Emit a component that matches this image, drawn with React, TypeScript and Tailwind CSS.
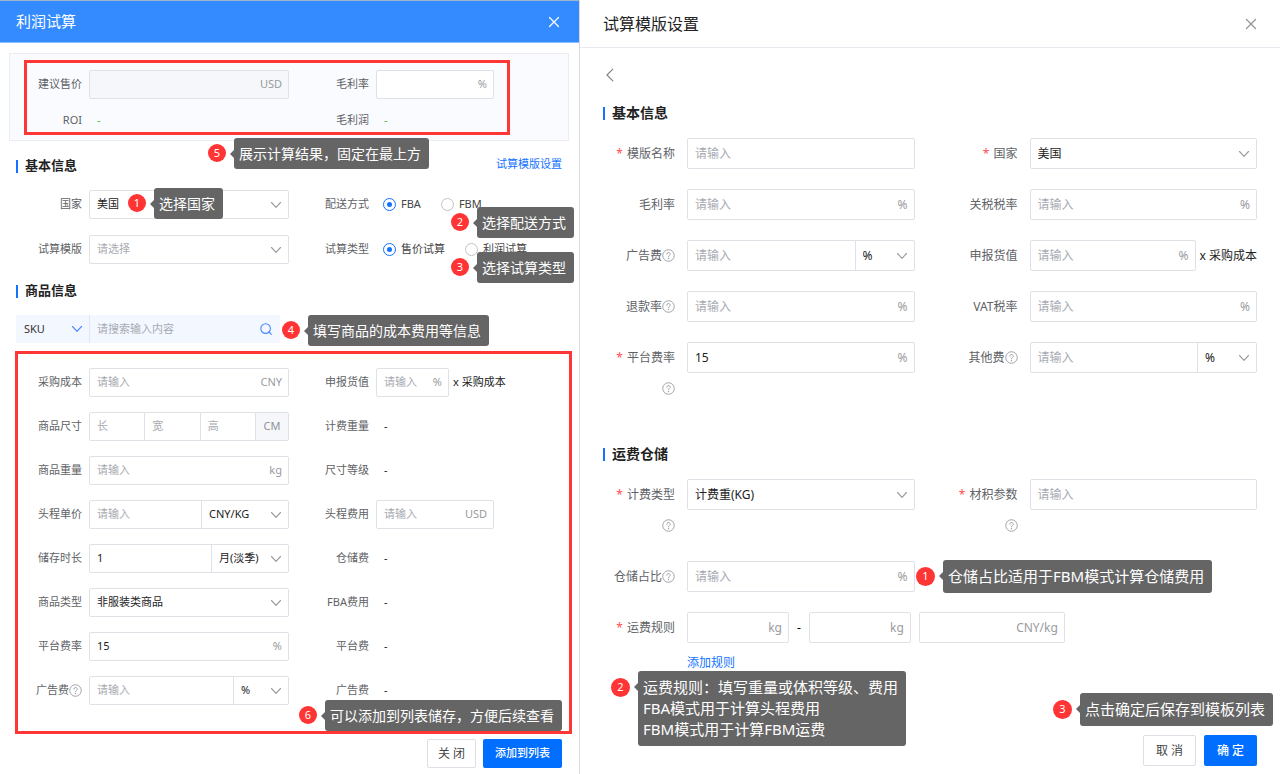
import type { ReactNode } from "react";

type Size = "sm" | "md";

const boxSize = { sm: "h-[29px] text-[11px]", md: "h-[31px] text-xs" };
const leftGrid = "grid grid-cols-[82px_200fr_73px_203fr] gap-x-[7px]";
const rightGrid = "grid grid-cols-[95px_1fr_91px_1fr] gap-x-3 pr-[23px]";

function ChevronDown({ className }: { className: string }) {
  return (
    <svg className={className} viewBox="0 0 12 12" fill="none" stroke="currentColor" strokeWidth={1.1}>
      <path strokeLinecap="round" strokeLinejoin="round" d="M1.5 3.5L6 8.3l4.500-4.800" />
    </svg>
  );
}

function CloseIcon() {
  return (
    <svg className="w-3 h-3" viewBox="0 0 12 12" fill="none" stroke="currentColor" strokeWidth={1.2}>
      <path strokeLinecap="round" d="M1.500 1.500l9 9m0-9l-9 9" />
    </svg>
  );
}

function HelpIcon() {
  return (
    <svg className="w-[13px] h-[13px] shrink-0 text-[#909399]" viewBox="0 0 14 14" fill="none" stroke="currentColor" strokeWidth={0.9}>
      <circle cx="7" cy="7" r="6.200" />
      <path strokeLinecap="round" d="M5.200 5.600a1.800 1.800 0 1 1 2.700 1.500c-.6.35-.9.700-.9 1.300" />
      <circle cx="7" cy="10.300" r="0.350" fill="currentColor" />
    </svg>
  );
}

type LabelProps = { id: string; text: string; size?: Size; required?: boolean; help?: boolean; helpBelow?: boolean };

function FieldLabel({ id, text, size = "sm", required, help, helpBelow }: LabelProps) {
  return (
    <div className="text-[#606266] whitespace-nowrap">
      <label htmlFor={id} className={`flex items-center justify-end ${boxSize[size]}`}>
        {required && <span className="text-[#ff5050] mr-1">*</span>}
        {text}
        {help && <HelpIcon />}
      </label>
      {helpBelow && (
        <div className="h-[31px] flex items-center justify-end">
          <HelpIcon />
        </div>
      )}
    </div>
  );
}

type BoxProps = { size?: Size; className?: string; children: ReactNode };

function Box({ size = "sm", className = "bg-white", children }: BoxProps) {
  return (
    <div className={`flex min-w-0 border border-[#dfe1e6] rounded-xs ${boxSize[size]} ${className}`}>{children}</div>
  );
}

type TextProps = { id?: string; label?: string; value?: string; placeholder?: string; unit?: string; disabled?: boolean };

function Text({ id, label, value, placeholder, unit, disabled }: TextProps) {
  return (
    <>
      <input
        id={id}
        aria-label={label}
        defaultValue={value}
        placeholder={placeholder}
        disabled={disabled}
        className="flex-1 w-0 min-w-0 pl-[7px] text-[#222] placeholder:text-[#a8abb2] outline-none"
      />
      {unit && <span className="self-center pr-[6px] text-[#999ba0]">{unit}</span>}
    </>
  );
}

type PickProps = { id?: string; label?: string; value: string; className?: string; muted?: boolean };

function Pick({ id, label, value, className = "flex-1", muted }: PickProps) {
  return (
    <div className={`relative flex ${className}`}>
      <select
        id={id}
        aria-label={label}
        className={`w-full appearance-none pl-[7px] pr-5 outline-none ${muted ? "text-[#a8abb2]" : "text-[#222]"}`}
      >
        <option>{value}</option>
      </select>
      <ChevronDown className="absolute right-[6px] top-1/2 -translate-y-1/2 w-3 h-3 text-[#999ba0] pointer-events-none" />
    </div>
  );
}

function Radio({ name, text, checked }: { name: string; text: string; checked?: boolean }) {
  return (
    <label className="flex items-center gap-[5px] whitespace-nowrap text-[#444]">
      <input
        type="radio"
        name={name}
        defaultChecked={checked}
        className="appearance-none flex items-center justify-center w-[13px] h-[13px] rounded-full border border-[#bfc2c8] checked:border-[#1373ff] checked:before:content-[''] checked:before:block checked:before:w-[5px] checked:before:h-[5px] checked:before:rounded-full checked:before:bg-[#1373ff]"
      />
      {text}
    </label>
  );
}

function Output({ id, green }: { id: string; green?: boolean }) {
  return (
    <output id={id} className={`pl-2 h-[29px] flex items-center text-[11px] ${green ? "text-[#52b81f]" : "text-[#222]"}`}>
      -
    </output>
  );
}

function SectionTitle({ text, className }: { text: string; className: string }) {
  return (
    <h2 className={`flex items-center h-5 font-bold text-[#222] ${className}`}>
      <span className="w-[2px] h-[13px] bg-[#1373ff] mr-[7px]" />
      {text}
    </h2>
  );
}

type CalloutProps = { n: number; size?: Size; position: string; children: ReactNode };

function Callout({ n, size = "sm", position, children }: CalloutProps) {
  const badge = size === "sm" ? "w-[18px] h-[18px] mt-[6px]" : "w-[19px] h-[19px] mt-[7px]";
  const body = size === "sm" ? "text-sm leading-[19px]" : "text-[15px] leading-[21px]";
  return (
    <div className={`absolute z-10 flex items-start text-white whitespace-nowrap ${position}`}>
      <span className={`rounded-full bg-[#ff3434] text-[11px] flex items-center justify-center ${badge}`}>{n}</span>
      <svg className="w-1 h-2 ml-1 mt-3" viewBox="0 0 4 8" fill="#656565">
        <path d="M4 0v8L0 4z" />
      </svg>
      <div className={`bg-[#656565] rounded-[3px] pl-[5px] pr-2 py-[6px] ${body}`}>{children}</div>
    </div>
  );
}

function ProfitPanel() {
  return (
    <section className="relative flex flex-col border-r border-[#d8d9dc] text-[11px]">
      <header className="h-[43px] shrink-0 bg-[#338bff] border-t border-t-[#9fb3cf] border-b border-b-[#8fbfff] flex items-center justify-between pl-4 pr-[19px] text-white">
        <h1 className="text-[15px]">利润试算</h1>
        <button aria-label="关闭窗口"><CloseIcon /></button>
      </header>

      <div className="relative mt-[10px] ml-[9px] mr-[10px] pt-4 pb-[5px] border border-[#ebedf3] bg-[#fafbff]">
        <div className="grid grid-cols-[72px_200fr_73px_192fr] gap-x-[7px] gap-y-[7px]">
          <FieldLabel id="price" text="建议售价" />
          <Box className="bg-[#f5f7fa]"><Text id="price" unit="USD" disabled /></Box>
          <FieldLabel id="margin" text="毛利率" />
          <Box className="bg-white w-[118px]"><Text id="margin" unit="%" /></Box>
          <FieldLabel id="roi" text="ROI" />
          <Output id="roi" green />
          <FieldLabel id="profit" text="毛利润" />
          <Output id="profit" green />
        </div>
        <div className="absolute left-[14px] right-[58px] top-[6px] bottom-[5px] border-3 border-[#ff3636] pointer-events-none" />
      </div>

      <div className="mt-[15px] pl-4 pr-[17px] flex items-start justify-between">
        <SectionTitle text="基本信息" className="text-[13px]" />
        <a href="#template" className="text-[#1373ff] leading-4">试算模版设置</a>
      </div>

      <div className={`mt-[14px] gap-y-4 ${leftGrid}`}>
        <FieldLabel id="country" text="国家" />
        <Box><Pick id="country" value="美国" /></Box>
        <span className="h-[29px] flex items-center justify-end text-[#606266]">配送方式</span>
        <div role="radiogroup" aria-label="配送方式" className="flex items-center gap-5 pl-[7px]">
          <Radio name="delivery" text="FBA" checked />
          <Radio name="delivery" text="FBM" />
        </div>
        <FieldLabel id="template" text="试算模版" />
        <Box><Pick id="template" value="请选择" muted /></Box>
        <span className="h-[29px] flex items-center justify-end text-[#606266]">试算类型</span>
        <div role="radiogroup" aria-label="试算类型" className="flex items-center gap-5 pl-[7px]">
          <Radio name="mode" text="售价试算" checked />
          <Radio name="mode" text="利润试算" />
        </div>
      </div>

      <SectionTitle text="商品信息" className="mt-[17px] ml-4 text-[13px]" />
      <div className="mt-[14px] ml-4 w-[264px] h-7 flex bg-[#f3f7ff]">
        <div className="relative w-[74px] flex border-r border-[#dfe7f7]">
          <select aria-label="搜索类型" className="w-full appearance-none pl-2 outline-none text-[#333]">
            <option>SKU</option>
          </select>
          <ChevronDown className="absolute right-[6px] top-2 w-3 h-3 text-[#4a86ff] pointer-events-none" />
        </div>
        <Text label="搜索商品" placeholder="请搜索输入内容" />
        <button aria-label="搜索" className="px-2 text-[#4a86ff]">
          <svg className="w-3 h-3" viewBox="0 0 12 12" fill="none" stroke="currentColor" strokeWidth={1.1}>
            <circle cx="5.600" cy="5.600" r="4.800" />
            <path strokeLinecap="round" d="M9 9l2.300 2.300" />
          </svg>
        </button>
      </div>

      <div className="relative mt-2 pt-[17px] pb-[29px]">
        <div className={`gap-y-[15px] ${leftGrid}`}>
          <FieldLabel id="cost" text="采购成本" />
          <Box><Text id="cost" placeholder="请输入" unit="CNY" /></Box>
          <FieldLabel id="declared" text="申报货值" />
          <div className="flex items-center gap-1 whitespace-nowrap text-[#222]">
            <Box className="bg-white w-[73px]"><Text id="declared" placeholder="请输入" unit="%" /></Box>
            x 采购成本
          </div>

          <FieldLabel id="length" text="商品尺寸" />
          <Box>
            <div className="flex-1 flex divide-x divide-[#dfe1e6]">
              <Text id="length" placeholder="长" />
              <Text label="宽" placeholder="宽" />
              <Text label="高" placeholder="高" />
              <span className="w-8 flex items-center justify-center bg-[#f5f7fa] text-[#909399]">CM</span>
            </div>
          </Box>
          <FieldLabel id="charge-weight" text="计费重量" />
          <Output id="charge-weight" />

          <FieldLabel id="weight" text="商品重量" />
          <Box><Text id="weight" placeholder="请输入" unit="kg" /></Box>
          <FieldLabel id="tier" text="尺寸等级" />
          <Output id="tier" />

          <FieldLabel id="first-price" text="头程单价" />
          <Box>
            <Text id="first-price" placeholder="请输入" />
            <Pick label="头程单价单位" value="CNY/KG" className="w-[87px] border-l border-[#dfe1e6]" />
          </Box>
          <FieldLabel id="first-fee" text="头程费用" />
          <Box className="bg-white w-[118px]"><Text id="first-fee" placeholder="请输入" unit="USD" /></Box>

          <FieldLabel id="months" text="储存时长" />
          <Box>
            <Text id="months" value="1" />
            <Pick label="储存季节" value="月(淡季)" className="w-[77px] border-l border-[#dfe1e6]" />
          </Box>
          <FieldLabel id="storage-fee" text="仓储费" />
          <Output id="storage-fee" />

          <FieldLabel id="kind" text="商品类型" />
          <Box><Pick id="kind" value="非服装类商品" /></Box>
          <FieldLabel id="fba-fee" text="FBA费用" />
          <Output id="fba-fee" />

          <FieldLabel id="rate" text="平台费率" />
          <Box><Text id="rate" value="15" unit="%" /></Box>
          <FieldLabel id="platform-fee" text="平台费" />
          <Output id="platform-fee" />

          <FieldLabel id="ads" text="广告费" help />
          <Box>
            <Text id="ads" placeholder="请输入" />
            <Pick label="广告费单位" value="%" className="w-[55px] border-l border-[#dfe1e6]" />
          </Box>
          <FieldLabel id="ads-fee" text="广告费" />
          <Output id="ads-fee" />
        </div>
        <div className="absolute left-[15px] right-[7px] inset-y-0 border-3 border-[#ff3636] pointer-events-none" />
      </div>

      <footer className="mt-[5px] pr-[17px] pb-[5px] flex justify-end gap-[7px]">
        <button className="h-[29px] w-[49px] border border-[#dcdfe6] rounded-xs text-xs text-[#444]">关 闭</button>
        <button className="h-[29px] px-3 rounded-xs bg-[#006eff] text-white font-medium">添加到列表</button>
      </footer>

      <Callout n={5} position="left-[208px] top-[138px]">展示计算结果，固定在最上方</Callout>
      <Callout n={1} position="left-[128px] top-[188px]">选择国家</Callout>
      <Callout n={2} position="left-[451px] top-[207px]">选择配送方式</Callout>
      <Callout n={3} position="left-[451px] top-[252px]">选择试算类型</Callout>
      <Callout n={4} position="left-[282px] top-[315px]">填写商品的成本费用等信息</Callout>
      <Callout n={6} position="left-[299px] top-[700px]">可以添加到列表储存，方便后续查看</Callout>
    </section>
  );
}

function TemplatePanel() {
  return (
    <section className="relative flex flex-col text-xs">
      <header className="h-12 shrink-0 border-b border-[#e8eaef] flex items-center justify-between px-[23px]">
        <h1 className="text-base text-[#222]">试算模版设置</h1>
        <button aria-label="关闭窗口" className="text-[#909399]"><CloseIcon /></button>
      </header>

      <button aria-label="返回" className="mt-5 ml-[23px] w-[14px] text-[#808388]">
        <svg className="w-[14px] h-[14px]" viewBox="0 0 14 14" fill="none" stroke="currentColor" strokeWidth={1.2}>
          <path strokeLinecap="round" strokeLinejoin="round" d="M9.800 1.200L4 7l5.800 5.800" />
        </svg>
      </button>

      <SectionTitle text="基本信息" className="mt-[21px] ml-[23px] text-sm" />
      <div className={`mt-[15px] gap-y-5 ${rightGrid}`}>
        <FieldLabel id="t-name" text="模版名称" size="md" required />
        <Box size="md"><Text id="t-name" placeholder="请输入" /></Box>
        <FieldLabel id="t-country" text="国家" size="md" required />
        <Box size="md"><Pick id="t-country" value="美国" /></Box>

        <FieldLabel id="t-margin" text="毛利率" size="md" />
        <Box size="md"><Text id="t-margin" placeholder="请输入" unit="%" /></Box>
        <FieldLabel id="t-duty" text="关税税率" size="md" />
        <Box size="md"><Text id="t-duty" placeholder="请输入" unit="%" /></Box>

        <FieldLabel id="t-ads" text="广告费" size="md" help />
        <Box size="md">
          <Text id="t-ads" placeholder="请输入" />
          <Pick label="广告费单位" value="%" className="w-[59px] border-l border-[#dfe1e6]" />
        </Box>
        <FieldLabel id="t-declared" text="申报货值" size="md" />
        <div className="flex items-center gap-1 whitespace-nowrap text-[#222]">
          <Box size="md" className="bg-white flex-1"><Text id="t-declared" placeholder="请输入" unit="%" /></Box>
          x 采购成本
        </div>

        <FieldLabel id="t-refund" text="退款率" size="md" help />
        <Box size="md"><Text id="t-refund" placeholder="请输入" unit="%" /></Box>
        <FieldLabel id="t-vat" text="VAT税率" size="md" />
        <Box size="md"><Text id="t-vat" placeholder="请输入" unit="%" /></Box>

        <FieldLabel id="t-rate" text="平台费率" size="md" required helpBelow />
        <Box size="md"><Text id="t-rate" value="15" unit="%" /></Box>
        <FieldLabel id="t-other" text="其他费" size="md" help />
        <Box size="md">
          <Text id="t-other" placeholder="请输入" />
          <Pick label="其他费单位" value="%" className="w-[59px] border-l border-[#dfe1e6]" />
        </Box>
      </div>

      <SectionTitle text="运费仓储" className="mt-10 ml-[23px] text-sm" />
      <div className={`mt-[15px] gap-y-5 ${rightGrid}`}>
        <FieldLabel id="t-charge" text="计费类型" size="md" required helpBelow />
        <Box size="md"><Pick id="t-charge" value="计费重(KG)" /></Box>
        <FieldLabel id="t-volume" text="材积参数" size="md" required helpBelow />
        <Box size="md"><Text id="t-volume" placeholder="请输入" /></Box>

        <FieldLabel id="t-storage" text="仓储占比" size="md" help />
        <Box size="md"><Text id="t-storage" placeholder="请输入" unit="%" /></Box>
        <div className="col-span-2" />

        <FieldLabel id="t-rule" text="运费规则" size="md" required />
        <div className="col-span-3">
          <div className="flex items-center gap-2">
            <Box size="md" className="w-[102px]"><Text id="t-rule" unit="kg" /></Box>
            <span>-</span>
            <Box size="md" className="w-[102px]"><Text label="重量上限" unit="kg" /></Box>
            <Box size="md" className="w-[146px]"><Text label="单价" unit="CNY/kg" /></Box>
          </div>
          <a href="#rule" className="inline-block mt-[10px] leading-5 text-[#1373ff]">添加规则</a>
        </div>
      </div>

      <footer className="mt-auto pr-[23px] pb-2 flex justify-end gap-2">
        <button className="h-[31px] w-[53px] border border-[#dcdfe6] rounded-xs text-[#444]">取 消</button>
        <button className="h-[31px] w-[53px] rounded-xs bg-[#006eff] text-white font-medium">确 定</button>
      </footer>

      <Callout n={1} size="md" position="left-[336px] top-[560px]">仓储占比适用于FBM模式计算仓储费用</Callout>
      <Callout n={2} size="md" position="left-[31px] top-[671px]">
        <p>运费规则：填写重量或体积等级、费用</p>
        <p>FBA模式用于计算头程费用</p>
        <p>FBM模式用于计算FBM运费</p>
      </Callout>
      <Callout n={3} size="md" position="right-[7px] bottom-12">点击确定后保存到模板列表</Callout>
    </section>
  );
}

export default function App() {
  return (
    <main className="min-h-screen grid grid-cols-[29fr_35fr] bg-white font-['Noto_Sans','Noto_Sans_CJK_SC',sans-serif]">
      <ProfitPanel />
      <TemplatePanel />
    </main>
  );
}
